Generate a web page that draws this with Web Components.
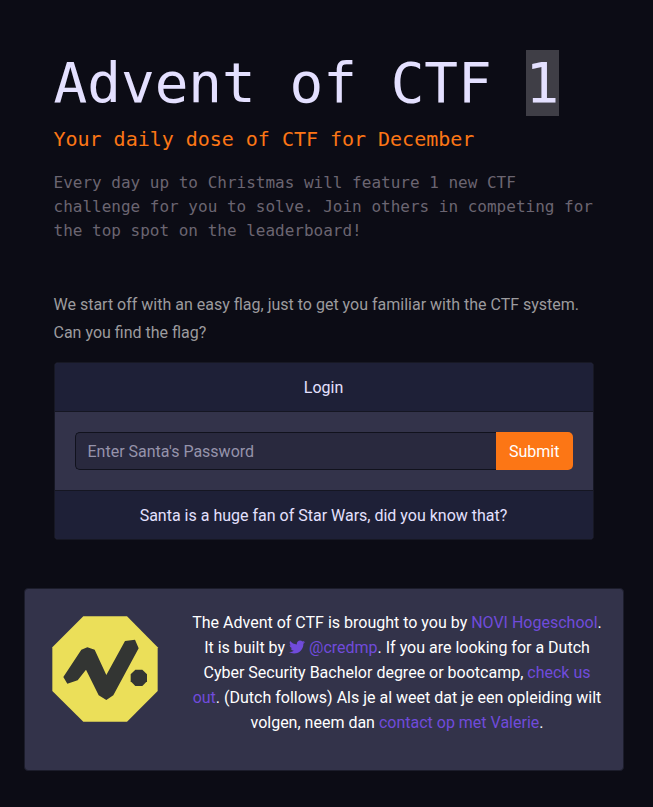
<!DOCTYPE html>
<html lang="en">
<head>
<meta charset="utf-8">
<title>Advent of CTF 1</title>
<style>
html, body { margin: 0; background: #0c0c15; }
body { font: 16px/1.5 Roboto, sans-serif; color: #e9e6ff; padding-right: 6px; }
</style>
</head>
<body>
<ctf-page>
  <ctf-hero slot="hero" day="1">
    <span slot="title">Advent of CTF</span>
    <span slot="subtitle">Your daily dose of CTF for December</span>
    Every day up to Christmas will feature 1 new CTF challenge for you to solve. Join others in competing for the top spot on the leaderboard!
  </ctf-hero>
  <ctf-intro slot="hero">We start off with an easy flag, just to get you familiar with the CTF system. Can you find the flag?</ctf-intro>
  <ctf-card slot="hero">
    <span slot="header">Login</span>
    <ctf-login placeholder="Enter Santa's Password"></ctf-login>
    <span slot="footer">Santa is a huge fan of Star Wars, did you know that?</span>
  </ctf-card>
  <ctf-sponsor>The Advent of CTF is brought to you by <ctf-link>NOVI Hogeschool</ctf-link>. It is built by <ctf-link><ctf-bird></ctf-bird> @credmp</ctf-link>. If you are looking for a Dutch Cyber Security Bachelor degree or bootcamp, <ctf-link>check us out</ctf-link>. (Dutch follows) Als je al weet dat je een opleiding wilt volgen, neem dan <ctf-link>contact op met Valerie</ctf-link>.</ctf-sponsor>
</ctf-page>
<script>
function define(name, html, setup) {
  const template = document.createElement('template');
  template.innerHTML = html;
  customElements.define(name, class extends HTMLElement {
    constructor() {
      super();
      this.attachShadow({ mode: 'open' }).append(template.content.cloneNode(true));
    }
    connectedCallback() { if (setup) setup(this, this.shadowRoot); }
  });
}

define('ctf-page', `<style>
:host { display: flex; flex-direction: column; align-items: center; padding-top: 48.5px; box-sizing: border-box; height: 807px; }
main { width: 540px; }
</style><main><slot name="hero"></slot></main><slot></slot>`);

define('ctf-hero', `<style>
:host { display: block; font-family: "DejaVu Sans Mono", monospace; }
h1 { margin: 0; font-size: 56px; font-weight: 400; line-height: 67.2px; color: #e4e0ff; }
mark { color: inherit; background: #3f3e46; padding-bottom: 1px; }
h2 { margin: 11px 0 0; font-size: 20px; font-weight: 400; line-height: 24px; letter-spacing: -0.02px; color: #fc7615; }
p { margin: 20px 0 0; line-height: 24px; color: #6b6571; }
</style><h1><slot name="title"></slot> <mark></mark></h1><h2><slot name="subtitle"></slot></h2><p><slot></slot></p>`,
(el, root) => { root.querySelector('mark').textContent = el.getAttribute('day'); });

define('ctf-intro', `<style>
:host { display: block; margin-top: 48px; line-height: 28px; color: #9c9b9e; }
</style><slot></slot>`);

define('ctf-card', `<style>
:host { display: block; box-sizing: border-box; height: 178px; margin-top: 15.3px; border: 1px solid #171824; border-radius: 4px; background: #33334a; overflow: hidden; text-align: center; }
header, footer { height: 48px; line-height: 49px; background: #1e2037; color: #e4e0ff; }
header { border-bottom: 1px solid #151622; }
footer { border-top: 1px solid #151622; }
section { padding: 20px; }
</style><header><slot name="header"></slot></header><section><slot></slot></section><footer><slot name="footer"></slot></footer>`);

define('ctf-login', `<style>
:host { display: flex; height: 38px; }
input { flex: 1; min-width: 0; box-sizing: border-box; border: 1px solid #11121d; border-right: 0; border-radius: 5px 0 0 5px; padding: 1px 12px 0; background: #29293e; font: inherit; }
input::placeholder { color: #9693ab; opacity: 1; }
button { border: 0; padding: 1px 13px 0; border-radius: 0 5px 5px 0; background: #fc7615; color: #fff; font: inherit; }
</style><input type="text"><button>Submit</button>`,
(el, root) => { root.querySelector('input').placeholder = el.getAttribute('placeholder'); });

define('ctf-link', `<style>:host { color: #704bdb; }</style><slot></slot>`);

define('ctf-bird', `<style>
:host { display: inline-block; width: 16px; height: 16px; vertical-align: -2px; }
svg { display: block; }
</style><svg width="16" height="16" viewBox="0 0 512 512" fill="currentColor"><path d="M459.37 151.716c.325 4.548.325 9.097.325 13.645 0 138.72-105.583 298.558-298.558 298.558-59.452 0-114.68-17.219-161.137-47.106 8.447.974 16.568 1.299 25.34 1.299 49.055 0 94.213-16.568 130.274-44.832-46.132-.975-84.792-31.188-98.112-72.772 6.498.974 12.995 1.624 19.818 1.624 9.421 0 18.843-1.3 27.614-3.573-48.081-9.747-84.143-51.98-84.143-102.985v-1.299c13.969 7.797 30.214 12.67 47.431 13.319-28.264-18.843-46.781-51.005-46.781-87.391 0-19.492 5.197-37.36 14.294-52.954 51.655 63.675 129.3 105.258 216.365 109.807-1.624-7.797-2.599-15.918-2.599-24.04 0-57.828 46.782-104.934 104.934-104.934 30.213 0 57.502 12.67 76.67 33.137 23.715-4.548 46.456-13.32 66.599-25.34-7.798 24.366-24.366 44.833-46.132 57.827 21.117-2.273 41.584-8.122 60.426-16.243-14.292 20.791-32.161 39.308-52.628 54.253z"/></svg>`);

define('novi-logo', `<style>
:host { display: block; width: 107px; height: 107px; }
svg { display: block; width: 100%; height: 100%; }
</style><svg viewBox="24 24 321 321"><path fill="#ebdf59" d="M118 25H249L341 118V249L249 341H118L25 249V118z"/><g fill="#333533"><path d="M58 207L112 125 130 118 152 125 187 201 243 99 273 95 284 121 208 262 187 276 164 262 126 185 101 217 70 227z"/><path d="M274 185H295L309 199V220L295 234H274L260 220V199z"/></g></svg>`);

define('ctf-sponsor', `<style>
:host { display: grid; grid-template-columns: 107px 414px; column-gap: 31px; box-sizing: border-box; width: 600px; height: 182.5px; margin-top: 48px; padding: 21px 18px 0 27.5px; border: 1px solid #1c1d2b; border-radius: 4px; background: #33334a; color: #fff; line-height: 25px; text-align: center; }
novi-logo { margin-top: 6px; }
</style><novi-logo></novi-logo><div><slot></slot></div>`);
</script>
</body>
</html>
